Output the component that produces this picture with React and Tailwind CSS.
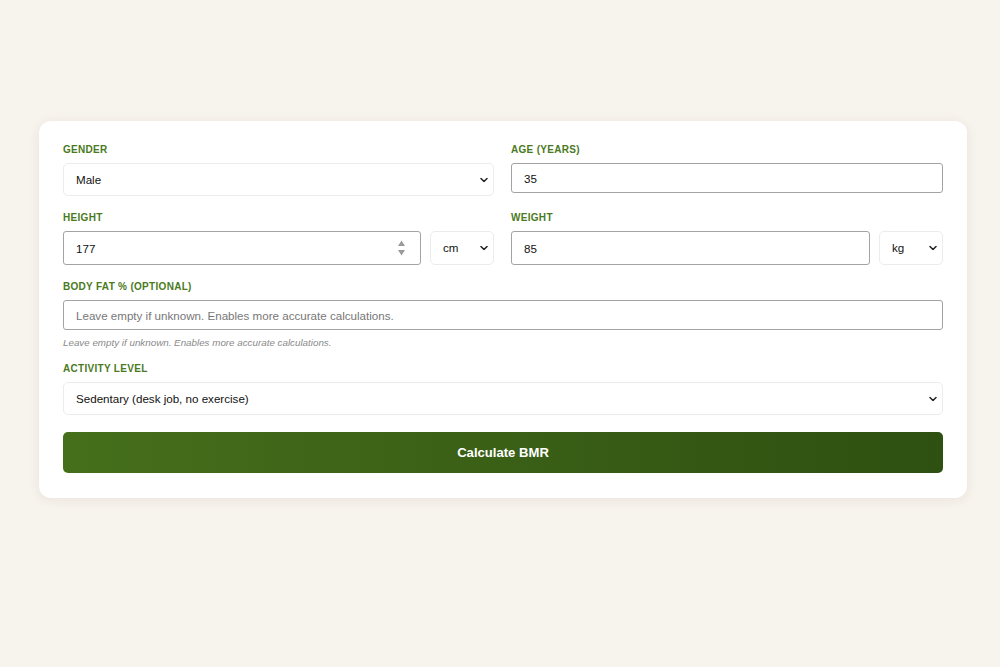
import React, { useState } from 'react';

const font = { fontFamily: '"Liberation Sans", Arial, sans-serif' };

// small chevron used by the select boxes
const Chevron = () => (
  <svg className="pointer-events-none absolute right-[6px] top-1/2 -translate-y-1/2" width="8" height="5" viewBox="0 0 8 5" fill="none">
    <path d="M1 1L4 4L7 1" stroke="#222" strokeWidth="1.5" strokeLinecap="round" strokeLinejoin="round" />
  </svg>
);

function Label({ children }) {
  return (
    <div className="mb-[7px] text-[10px] leading-[12px] font-bold uppercase tracking-[0.03em] text-[#4a7a1e]">
      {children}
    </div>
  );
}

function Select({ value, onChange, options, className = '', h = 'h-[33px]' }) {
  return (
    <div className={`relative ${className}`}>
      <select
        value={value}
        onChange={(e) => onChange(e.target.value)}
        className={`${h} w-full appearance-none rounded-[5px] border border-[#ececec] bg-white pl-[12px] pr-6 text-[11.6px] text-[#111] outline-none`}
        style={font}
      >
        {options.map((o) => (
          <option key={o}>{o}</option>
        ))}
      </select>
      <Chevron />
    </div>
  );
}

function TextInput({ value, onChange, placeholder, h = 'h-[30px]', spinner = false }) {
  return (
    <div className="relative w-full">
      <input
        type="text"
        value={value}
        placeholder={placeholder}
        onChange={(e) => onChange(e.target.value)}
        className={`${h} w-full rounded-[3px] border border-[#a3a3a3] bg-white px-[12px] text-[11.6px] text-[#111] placeholder:text-[#777] outline-none`}
        style={font}
      />
      {spinner && (
        <svg className="pointer-events-none absolute right-[15px] top-1/2 -translate-y-1/2" width="9" height="17" viewBox="0 0 9 17">
          <path d="M4.5 1L8 6.5H1Z" fill="#9a9a9a" />
          <path d="M4.5 16L8 10.5H1Z" fill="#9a9a9a" />
        </svg>
      )}
    </div>
  );
}

export default function App() {
  const [gender, setGender] = useState('Male');
  const [age, setAge] = useState('35');
  const [height, setHeight] = useState('177');
  const [hUnit, setHUnit] = useState('cm');
  const [weight, setWeight] = useState('85');
  const [wUnit, setWUnit] = useState('kg');
  const [bodyFat, setBodyFat] = useState('');
  const [activity, setActivity] = useState('Sedentary (desk job, no exercise)');

  return (
    <div className="min-h-[667px] w-full bg-[#f7f3ed] pt-[121px] pl-[39px]" style={font}>
      <div className="w-[928px] rounded-[12px] bg-white px-[24px] pt-[23px] pb-[25px] shadow-[0_2px_12px_rgba(80,60,30,0.08)]">
        <div className="grid grid-cols-[431px_432px] gap-x-[17px] gap-y-[16px]">
          <div>
            <Label>Gender</Label>
            <Select value={gender} onChange={setGender} options={['Male', 'Female']} />
          </div>
          <div>
            <Label>Age (years)</Label>
            <TextInput value={age} onChange={setAge} />
          </div>
          <div>
            <Label>Height</Label>
            <div className="flex gap-[9px]">
              <TextInput value={height} onChange={setHeight} h="h-[34px]" spinner />
              <Select value={hUnit} onChange={setHUnit} options={['cm', 'in']} h="h-[34px]" className="w-[64px] shrink-0" />
            </div>
          </div>
          <div>
            <Label>Weight</Label>
            <div className="flex gap-[9px]">
              <TextInput value={weight} onChange={setWeight} h="h-[34px]" />
              <Select value={wUnit} onChange={setWUnit} options={['kg', 'lb']} h="h-[34px]" className="w-[64px] shrink-0" />
            </div>
          </div>
          <div className="col-span-2">
            <Label>Body Fat % (optional)</Label>
            <TextInput
              value={bodyFat}
              onChange={setBodyFat}
              placeholder="Leave empty if unknown. Enables more accurate calculations."
            />
            <div className="mt-[7px] text-[9.8px] leading-[12px] italic text-[#8a8a8a]">
              Leave empty if unknown. Enables more accurate calculations.
            </div>
          </div>
          <div className="col-span-2 -mt-[2px]">
            <Label>Activity Level</Label>
            <Select
              value={activity}
              onChange={setActivity}
              options={[
                'Sedentary (desk job, no exercise)',
                'Lightly active (1-3 days/week)',
                'Moderately active (3-5 days/week)',
                'Very active (6-7 days/week)',
                'Extra active (physical job)',
              ]}
            />
          </div>
        </div>
        <button
          type="button"
          className="mt-[17px] h-[41px] w-full rounded-[5px] bg-gradient-to-r from-[#466f1b] to-[#2e5011] text-[13.1px] font-bold text-white"
          style={font}
        >
          Calculate BMR
        </button>
      </div>
    </div>
  );
}
